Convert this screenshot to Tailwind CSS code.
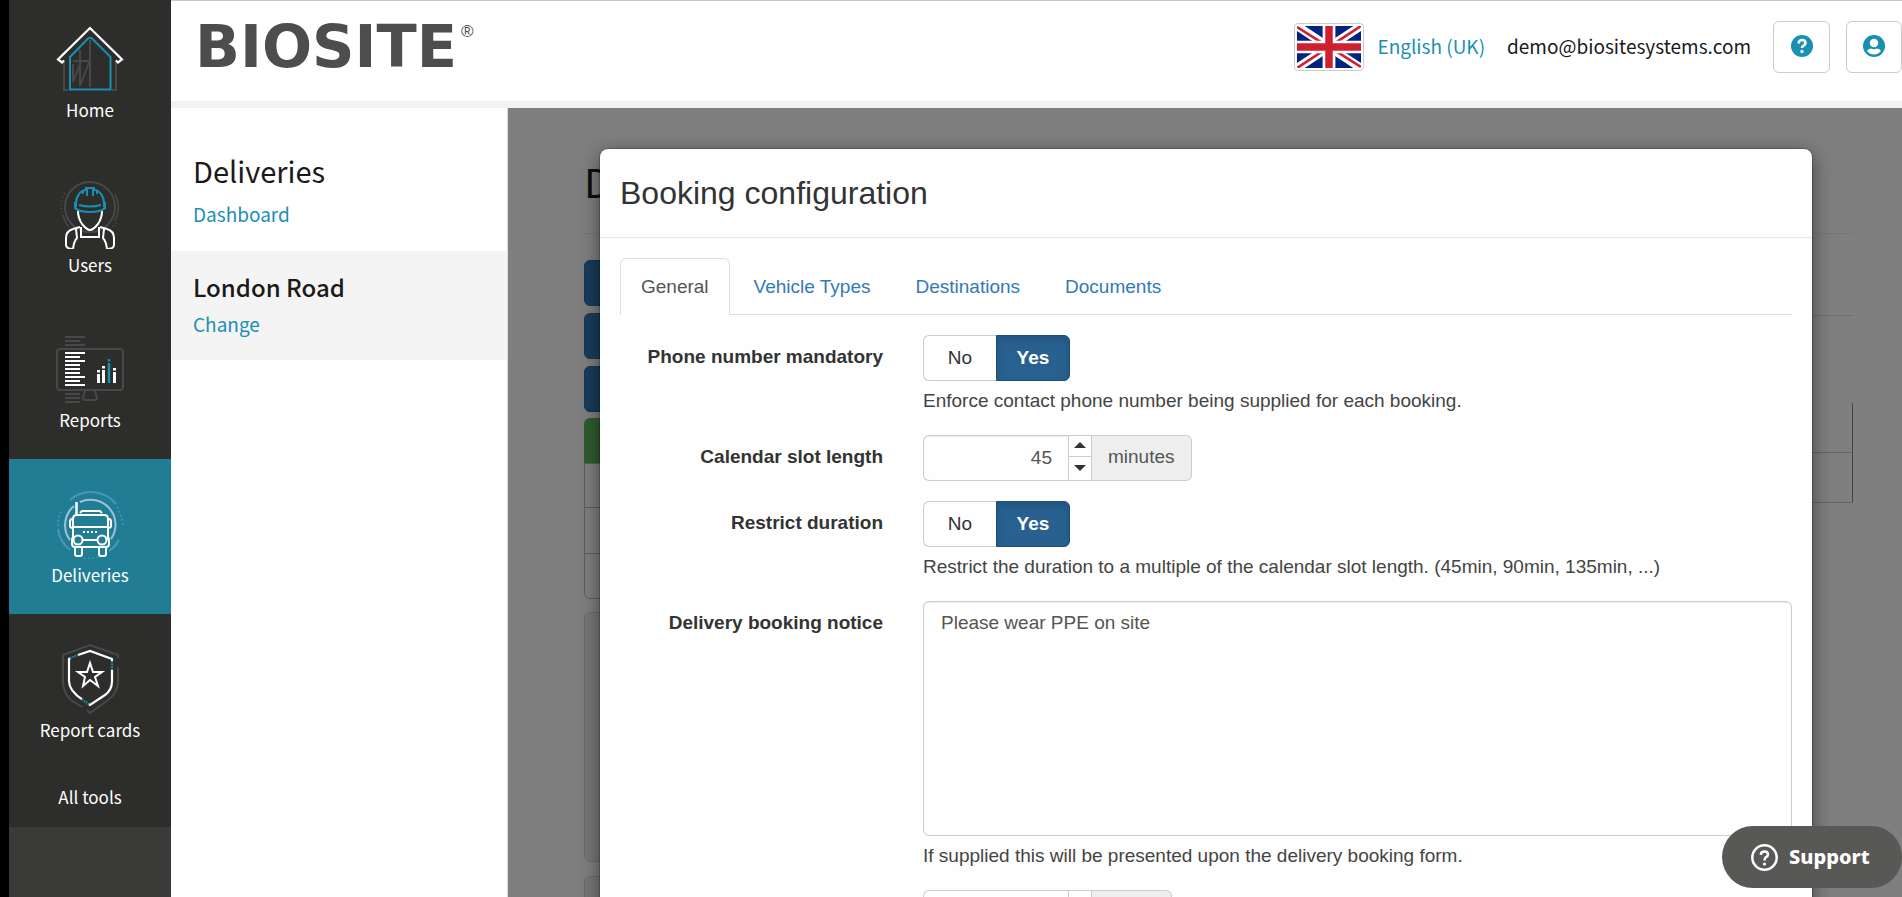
<!DOCTYPE html>
<html lang="en">
<head>
<meta charset="utf-8">
<title>Booking configuration</title>
<script src="https://cdn.jsdelivr.net/npm/@tailwindcss/browser@4"></script>
</head>
<body class="h-screen overflow-hidden bg-black font-['Noto_Sans_CJK_SC',sans-serif] text-[#1a1a1a]">
<div class="flex h-full pl-[9px]">

  <nav aria-label="Main" class="flex w-[162px] shrink-0 flex-col bg-[#3a3a38] text-center text-[17px] leading-6 text-white">
    <a href="#" class="flex h-[149px] shrink-0 flex-col items-center bg-[#2d2d2b] pt-[26px]">
      <svg class="h-[68px] w-[68px]" viewBox="0 0 68 68" fill="none">
        <path d="M8 34V64h4M60 34V64h-4" stroke="#484848" stroke-width="2"/>
        <path d="M34 14V61M17 35H33M24 24V60M17 56L24 38M24 60L34 34M17 38V56" stroke="#484848" stroke-width="2"/>
        <path d="M14 63.500V31L32 12.500Q34 11 36 12.500L54.500 31V63.500Z" stroke="#1a8fb4" stroke-width="2"/>
        <path d="M8 34.500L6 36.500L2 33.500L34 2L66 33.500L62 36.500L60 34.500" stroke="#fff" stroke-width="2.200"/>
      </svg>
      <span class="pt-1">Home</span>
    </a>
    <a href="#" class="flex h-[155px] shrink-0 flex-col items-center bg-[#2d2d2b] pt-[32px]">
      <svg class="h-[68px] w-[68px]" viewBox="0 0 68 68" fill="none">
        <circle cx="34" cy="26" r="25" stroke="#484848" stroke-width="2"/>
        <path d="M59 13Q66 26 59 40M7 34Q9 42 13 46" stroke="#484848" stroke-width="1.500"/>
        <path d="M9 12Q3 22 6 32M60 42L53 50" stroke="#484848" stroke-width="1.500" stroke-dasharray="1.500 2.500"/>
        <path d="M22 29Q22 37 26 43Q31 49 34 49Q37 49 42 43Q46 37 46 29Z" fill="#2d2d2b"/>
        <path d="M22 30Q22 37 26 43Q31 49 34 49Q37 49 42 43Q46 37 46 30" stroke="#fff" stroke-width="2"/>
        <path d="M20 22C20 15 25 9 30 9V7H38V9C43 9 48 15 48 22V24L49 23V27Q45 31 34 31Q23 31 19 27V23L20 24Z" stroke="#1a8fb4" stroke-width="2" fill="#2d2d2b"/>
        <path d="M31 8V15M37 8V15M27 10V13M41 10V13M23 24Q34 27 45 24" stroke="#1a8fb4" stroke-width="2"/>
        <path d="M25 46V56H43V46M24 46L17 48Q10 50 10 57V64Q10 68 17 68Q18 60 21 57L20 48M44 46L51 48Q58 50 58 57V64Q58 68 51 68Q50 60 47 57L48 48" stroke="#fff" stroke-width="2"/>
      </svg>
      <span class="pt-1">Users</span>
    </a>
    <a href="#" class="flex h-[155px] shrink-0 flex-col items-center bg-[#2d2d2b] pt-[32px]">
      <svg class="h-[68px] w-[68px]" viewBox="0 0 68 68" fill="none">
        <rect x="1" y="13" width="66" height="41" rx="3" stroke="#484848" stroke-width="2"/>
        <path d="M29 55L27 62Q27 64 29 64H39Q41 64 41 62L39 55" stroke="#484848" stroke-width="2"/>
        <path d="M9 1H29M9 5H24M9 9H29M9 58H24M9 62H24M9 66H24" stroke="#484848" stroke-width="2"/>
        <path d="M9 17H29M9 21H24M9 25H29M9 29H24M9 33H24M9 37H24M9 41H29M9 45H24M9 49H29" stroke="#fff" stroke-width="2.200"/>
        <path d="M42.500 38V47M47.500 34V47M58.500 36V47M42.500 34V36.500M47.500 30V32.500M58.500 32V34.500" stroke="#fff" stroke-width="3"/>
        <path d="M53 27V47M53 23V25.500" stroke="#1a8fb4" stroke-width="2.500"/>
      </svg>
      <span class="pt-1">Reports</span>
    </a>
    <a href="#" aria-current="page" class="flex h-[155px] shrink-0 flex-col items-center bg-[#217d93] pt-[32px]">
      <svg class="h-[68px] w-[68px]" viewBox="0 0 68 68" fill="none">
        <path d="M14 9A32 32 0 0 1 60 13M14 59A32 32 0 0 1 2 38M63 49A32 32 0 0 1 53 60" stroke="#4a95b9" stroke-width="2"/>
        <path d="M2 35Q2 27 5 20M61 16Q67 26 67 36M28 67Q34 68 42 66" stroke="#4a95b9" stroke-width="1.800" stroke-dasharray="1.800 2.500"/>
        <path d="M18 15A25 25 0 0 0 14 49M24 11A25 25 0 0 1 55 48" stroke="#9bc3dd" stroke-width="2"/>
        <g stroke="#fff" stroke-width="2">
          <path d="M20.500 11V23" stroke-width="2.500"/>
          <path d="M24 22L26 20H44L46 22M17 49V28Q17 24 21 24H48Q52 24 52 28V49M17 36H52M17 28H16Q14 28 14 31V35Q14 37 17 37M52 28H53Q55 28 55 31V35Q55 37 52 37M27 49H41"/>
          <path d="M17 46Q16 47 16 50V53Q16 56 19 56H50Q53 56 53 53V50Q53 47 52 46M19 57V63Q19 65 21 65H24Q26 65 26 63V57M43 57V63Q43 65 45 65H48Q50 65 50 63V57"/>
          <circle cx="22" cy="49" r="4.500" fill="#217d93"/><circle cx="46" cy="49" r="4.500" fill="#217d93"/>
          <path d="M27 41H42" stroke-dasharray="2 2"/>
        </g>
      </svg>
      <span class="pt-1">Deliveries</span>
    </a>
    <a href="#" class="flex h-[155px] shrink-0 flex-col items-center bg-[#2d2d2b] pt-[32px]">
      <svg class="h-[68px] w-[68px] overflow-visible" viewBox="0 0 68 68" fill="none">
        <path d="M62 12V9L34 -1L7 9V35Q7 47 15 54L26 61M31 64L34 67L52 54Q62 47 62 35V21" stroke="#484848" stroke-width="2"/>
        <path d="M19 10L34 5L56 13V35Q56 44 49 49L34 59L27 54Q13 45 13 35V13L15 12" stroke="#fff" stroke-width="2.200"/>
        <path d="M14 12L22 9M56 15V24M26 53L33 58" stroke="#2d2d2b" stroke-width="3"/>
        <path d="M14 12L22 9M56 15V24M26 53L33 58" stroke="#1a8fb4" stroke-width="2" stroke-dasharray="1.500 1"/>
        <path d="M34 17L37 26H46L39 31L42 40L34 34L27 40L29 31L22 26H31Z" stroke="#fff" stroke-width="2"/>
      </svg>
      <span class="pt-1">Report cards</span>
    </a>
    <a href="#" class="flex h-[58px] shrink-0 items-center justify-center bg-[#2d2d2b] pb-[3px]">All tools</a>
  </nav>

  <div class="flex min-w-0 flex-1 flex-col bg-white">
    <header class="flex h-[108px] shrink-0 justify-between border-t border-b-[7px] border-t-[#c8c8c8] border-b-[#f3f3f3] bg-white pl-6">
      <svg class="mt-[14px] h-[60px] w-[290px]" viewBox="0 0 290 60" role="img" aria-label="Biosite">
        <text x="0" y="52" font-family="DejaVu Sans" font-weight="700" font-size="59" fill="#4d4d4d">BIOSITE</text>
        <text x="266" y="22" font-family="Liberation Sans" font-size="17" fill="#4d4d4d">®</text>
      </svg>
      <div class="flex items-start pt-5 text-[19px] leading-[50px]">
        <svg class="mt-[2px] h-12 w-[70px] rounded border border-[#ccc] bg-white p-[2px]" viewBox="0 0 60 40" preserveAspectRatio="none">
          <rect width="60" height="40" fill="#00247d"/>
          <path d="M0 0L60 40M60 0L0 40" stroke="#fff" stroke-width="8"/>
          <path d="M0 1L25 17M60 0L33 18M60 39L35 23M0 40L27 22" stroke="#cf2030" stroke-width="2.500"/>
          <path d="M30 0V40M0 20H60" stroke="#fff" stroke-width="12"/>
          <path d="M30 0V40M0 20H60" stroke="#cf2030" stroke-width="7"/>
        </svg>
        <a href="#" class="ml-[13px] text-[#1a8fb4]">English (UK)</a>
        <span class="ml-[22px]">demo@biositesystems.com</span>
        <button type="button" aria-label="Help" class="ml-[22px] flex h-[52px] w-[57px] items-center justify-center rounded-md border border-[#ccc] pb-[2px]">
          <svg class="h-[22px] w-[22px]" viewBox="0 0 22 22"><circle cx="11" cy="11" r="11" fill="#1a8fb4"/><path d="M7.500 8.500Q8 5 11 5Q14.500 5 14.500 8Q14.500 9.500 12.500 10.700Q11 11.500 11 13" fill="none" stroke="#fff" stroke-width="2.600"/><circle cx="11" cy="16.500" r="1.700" fill="#fff"/></svg>
        </button>
        <button type="button" aria-label="Account" class="ml-4 flex h-[52px] w-14 items-center justify-center rounded-md border border-[#ccc] pb-[2px]">
          <svg class="h-[22px] w-[22px]" viewBox="0 0 22 22"><circle cx="11" cy="11" r="11" fill="#1a8fb4"/><circle cx="11" cy="8" r="4.200" fill="#fff"/><path d="M4 16Q5 13.500 8 13.500Q11 15 14 13.500Q17 13.500 18 16Q15 19.500 11 19.500Q7 19.500 4 16Z" fill="#fff"/></svg>
        </button>
      </div>
    </header>

    <div class="flex min-h-0 flex-1">
      <aside class="w-[337px] shrink-0 border-r border-[#ddd]">
        <div class="h-[143px] pt-[42px] pl-[22px]">
          <h2 class="text-[29px] leading-10">Deliveries</h2>
          <a href="#" class="block pt-1 text-[19px] leading-10 text-[#1a8fb4]">Dashboard</a>
        </div>
        <div class="h-[109px] bg-[#f4f4f4] pt-4 pl-[22px]">
          <h3 class="text-2xl leading-10 font-medium">London Road</h3>
          <a href="#" class="block text-[19px] leading-[34px] text-[#1a8fb4]">Change</a>
        </div>
      </aside>

      <main class="relative min-w-0 flex-1 overflow-hidden">
        <div class="flex h-full flex-col pr-[49px] pl-[76px]">
          <h1 class="h-[126px] shrink-0 border-b border-[#eee] pt-12 text-[40px] leading-[50px]">D</h1>
          <div class="flex gap-10 pt-[26px]">
            <div class="w-60 shrink-0">
              <div class="mb-[7px] h-[46px] rounded-md border border-[#2e6da4] bg-[#337ab7]"></div>
              <div class="mb-[7px] h-[46px] rounded-md border border-[#2e6da4] bg-[#337ab7]"></div>
              <div class="mb-[6px] h-[46px] rounded-md border border-[#2e6da4] bg-[#337ab7]"></div>
              <div class="h-[45px] rounded-t-md bg-[#5cb85c]"></div>
              <div class="h-[45px] border border-[#bbb]"></div>
              <div class="h-[45px] border-x border-[#bbb]"></div>
              <div class="mb-[13px] h-[46px] rounded-b-md border border-[#bbb]"></div>
              <div class="mb-[14px] h-[250px] rounded-md border border-[#d5d5d5] bg-[#f0f0f0]"></div>
              <div class="h-[80px] rounded-md border border-[#d5d5d5] bg-[#f0f0f0]"></div>
            </div>
            <div class="flex-1">
              <div class="mb-[87px] h-14 border-b border-[#ddd]"></div>
              <div class="h-[50px] border-r border-b border-r-[#888] border-b-[#ccc]"></div>
              <div class="h-[50px] border-r border-b border-r-[#888] border-b-[#ccc]"></div>
            </div>
          </div>
        </div>

        <div class="absolute inset-0 overflow-hidden bg-black/50 pt-[41px] pr-[90px] pl-[92px] font-['Liberation_Sans',sans-serif] text-[19px] leading-[27px] text-[#333]">
          <section role="dialog" aria-labelledby="dlg-title" class="rounded-lg bg-[#fefefe] shadow-[0_5px_20px_rgba(0,0,0,0.5),0_0_0_1px_rgba(0,0,0,0.2)]">
            <div class="border-b border-[#e5e5e5] px-5 pt-[22px] pb-[22px]">
              <h2 id="dlg-title" class="text-[32px] leading-[44px]">Booking configuration</h2>
            </div>
            <div class="p-5">
              <div role="tablist" class="flex border-b border-[#ddd]">
                <button type="button" role="tab" aria-selected="true" class="mr-[3px] -mb-px h-[57px] rounded-t-md border border-[#ddd] border-b-[#fefefe] bg-[#fefefe] px-5 text-[#555]">General</button>
                <button type="button" role="tab" aria-selected="false" class="mr-[3px] h-14 px-[21px] text-[#337ab7]">Vehicle Types</button>
                <button type="button" role="tab" aria-selected="false" class="mr-[3px] h-14 px-[21px] text-[#337ab7]">Destinations</button>
                <button type="button" role="tab" aria-selected="false" class="h-14 px-[21px] text-[#337ab7]">Documents</button>
              </div>

              <form class="-mx-5 flex flex-col gap-5 pt-5">
                <div class="grid grid-cols-4" role="group" aria-labelledby="l-phone">
                  <span id="l-phone" class="px-5 pt-2 text-right font-bold">Phone number mandatory</span>
                  <div class="col-span-3 px-5">
                    <div class="flex h-[46px]">
                      <button type="button" class="w-[73px] rounded-l-md border border-r-0 border-[#ccc] pb-[2px]">No</button>
                      <button type="button" aria-pressed="true" class="w-[74px] rounded-r-md border border-[#204d74] bg-[#286090] pb-[2px] font-bold text-white shadow-[inset_0_4px_7px_rgba(0,0,0,0.125)]">Yes</button>
                    </div>
                    <p class="pt-[6px] pb-px text-[#444]">Enforce contact phone number being supplied for each booking.</p>
                  </div>
                </div>
                <div class="grid grid-cols-4">
                  <label for="slot" class="px-5 pt-2 text-right font-bold">Calendar slot length</label>
                  <div class="col-span-3 flex h-[46px] px-5">
                    <input id="slot" type="text" value="45" class="w-[145px] rounded-l-md border border-r-0 border-[#ccc] px-4 pb-[2px] text-right text-[#555] shadow-[inset_0_1px_1px_rgba(0,0,0,0.075)]">
                    <div class="flex w-6 flex-col border border-[#ccc]">
                      <button type="button" aria-label="Increase" class="flex h-[21px] items-center justify-center border-b border-[#ccc] pb-[2px]"><svg class="h-[6px] w-3" viewBox="0 0 12 6"><path d="M0 6L6 0L12 6Z" fill="#333"/></svg></button>
                      <button type="button" aria-label="Decrease" class="flex h-[21px] items-center justify-center"><svg class="h-[6px] w-3" viewBox="0 0 12 6"><path d="M0 0L6 6L12 0Z" fill="#333"/></svg></button>
                    </div>
                    <span class="flex items-center rounded-r-md border border-l-0 border-[#ccc] bg-[#eee] px-4 pb-[3px] text-[#555]">minutes</span>
                  </div>
                </div>
                <div class="grid grid-cols-4" role="group" aria-labelledby="l-restrict">
                  <span id="l-restrict" class="px-5 pt-2 text-right font-bold">Restrict duration</span>
                  <div class="col-span-3 px-5">
                    <div class="flex h-[46px]">
                      <button type="button" class="w-[73px] rounded-l-md border border-r-0 border-[#ccc] pb-[2px]">No</button>
                      <button type="button" aria-pressed="true" class="w-[74px] rounded-r-md border border-[#204d74] bg-[#286090] pb-[2px] font-bold text-white shadow-[inset_0_4px_7px_rgba(0,0,0,0.125)]">Yes</button>
                    </div>
                    <p class="pt-[6px] pb-px text-[#444]">Restrict the duration to a multiple of the calendar slot length. (45min, 90min, 135min, ...)</p>
                  </div>
                </div>
                <div class="grid grid-cols-4">
                  <label for="notice" class="px-5 pt-2 text-right font-bold">Delivery booking notice</label>
                  <div class="col-span-3 px-5">
                    <textarea id="notice" class="block h-[235px] w-full rounded-md border border-[#ccc] px-[17px] py-[7px] text-[#555] shadow-[inset_0_1px_1px_rgba(0,0,0,0.075)]">Please wear PPE on site</textarea>
                    <p class="pt-[6px] pb-px text-[#444]">If supplied this will be presented upon the delivery booking form.</p>
                  </div>
                </div>
                <div class="grid grid-cols-4">
                  <div class="col-span-3 col-start-2 flex h-[46px] px-5">
                    <input type="text" aria-label="Notice period" class="w-[145px] rounded-l-md border border-r-0 border-[#ccc] px-4 text-right">
                    <div class="w-6 border border-[#ccc]"></div>
                    <span class="w-20 rounded-r-md border border-l-0 border-[#ccc] bg-[#eee]"></span>
                  </div>
                </div>
              </form>
            </div>
          </section>
        </div>
      </main>
    </div>
  </div>
</div>

<button type="button" class="fixed right-0 bottom-[9px] flex h-[62px] w-[180px] items-center gap-[11px] rounded-full bg-[#585856] pl-[29px] font-['Noto_Sans',sans-serif] text-xl font-extrabold text-white">
  <svg class="h-[27px] w-[27px]" viewBox="0 0 27 27" fill="none" stroke="#fff"><circle cx="13.500" cy="13.500" r="12.200" stroke-width="2.500"/><path d="M9.800 10.800Q10 7.500 13.500 7.500Q17 7.500 17 10.500Q17 12 15 13.200Q13.500 14 13.500 16.500" stroke-width="2.500"/><circle cx="13.500" cy="20" r="1.600" fill="#fff" stroke="none"/></svg>
  Support
</button>
</body>
</html>
